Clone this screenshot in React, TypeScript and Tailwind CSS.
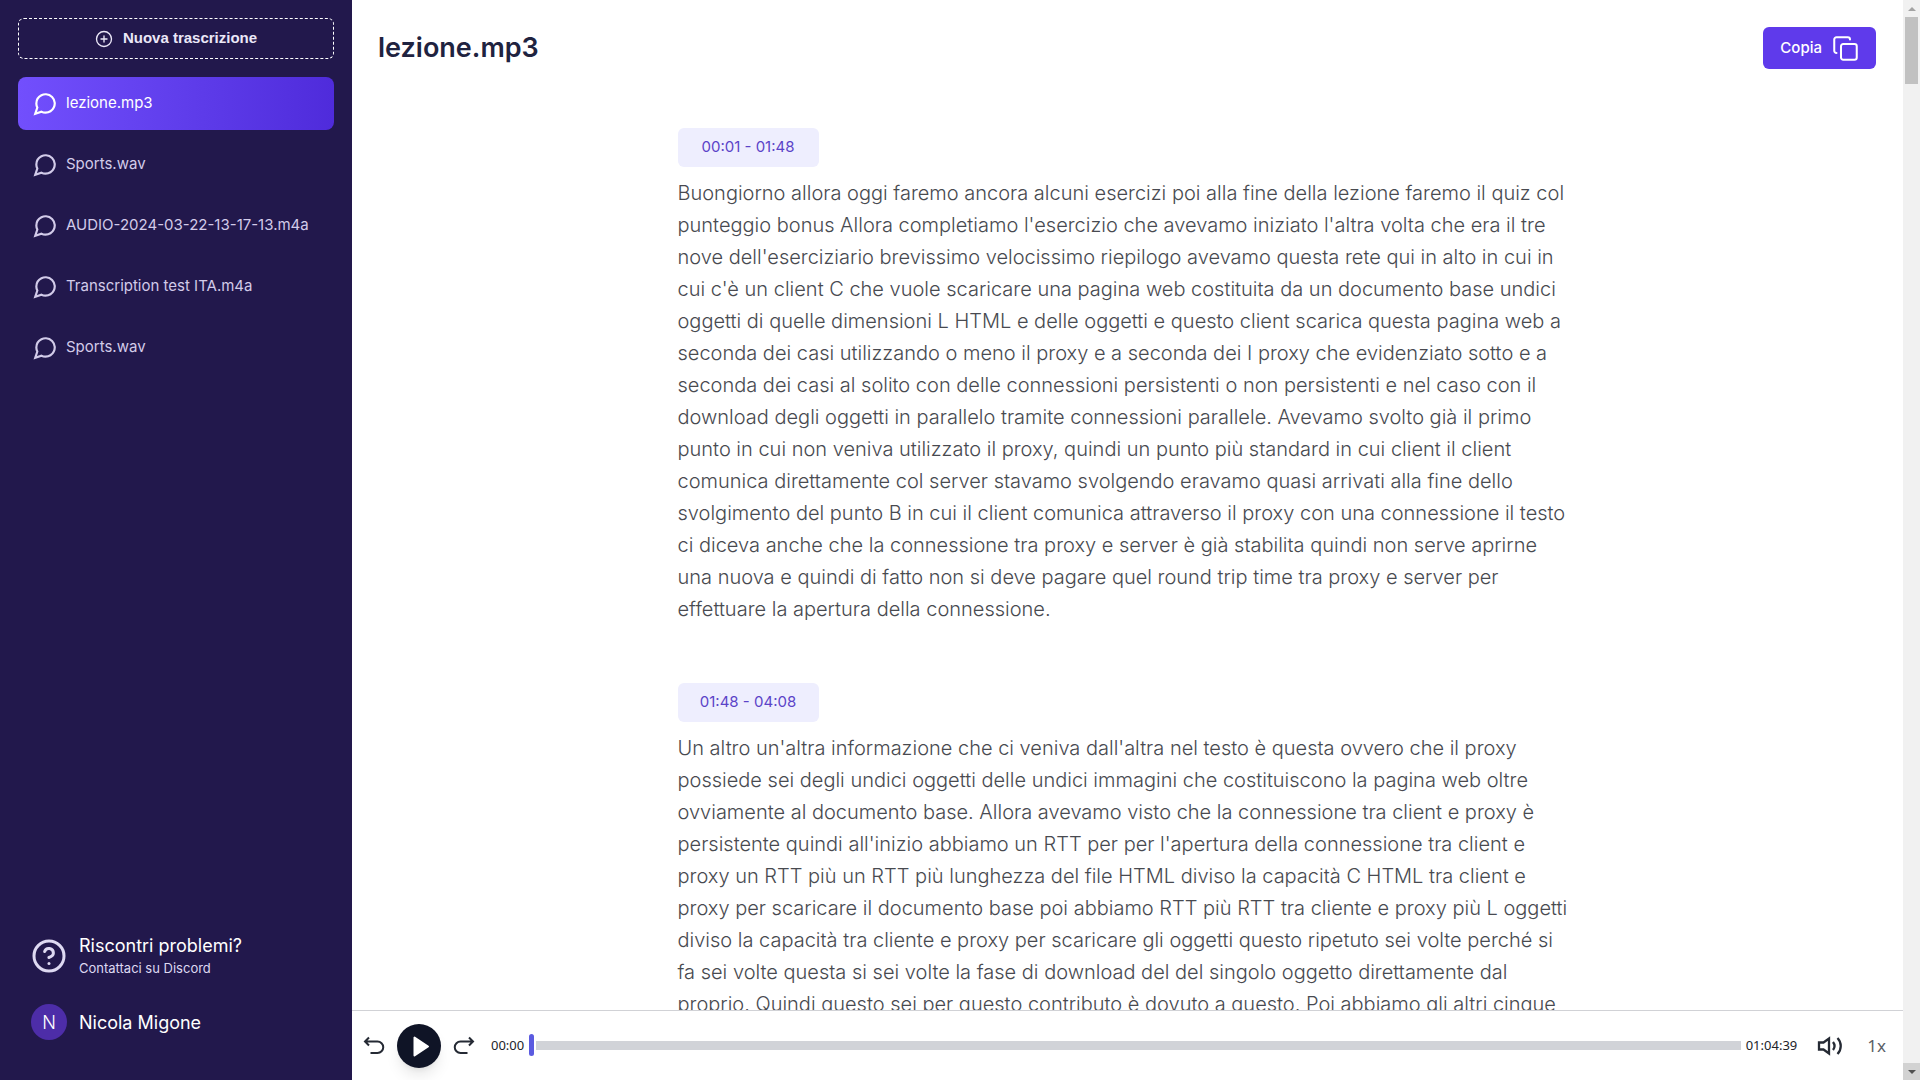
import React from "react";
import { CirclePlus, Copy, CircleHelp } from "lucide-react";

const files = [
  "lezione.mp3",
  "Sports.wav",
  "AUDIO-2024-03-22-13-17-13.m4a",
  "Transcription test ITA.m4a",
  "Sports.wav",
];

const segments = [
  {
    range: "00:01 - 01:48",
    text: "Buongiorno allora oggi faremo ancora alcuni esercizi poi alla fine della lezione faremo il quiz col punteggio bonus Allora completiamo l'esercizio che avevamo iniziato l'altra volta che era il tre nove dell'eserciziario brevissimo velocissimo riepilogo avevamo questa rete qui in alto in cui in cui c'è un client C che vuole scaricare una pagina web costituita da un documento base undici oggetti di quelle dimensioni L HTML e delle oggetti e questo client scarica questa pagina web a seconda dei casi utilizzando o meno il proxy e a seconda dei I proxy che evidenziato sotto e a seconda dei casi al solito con delle connessioni persistenti o non persistenti e nel caso con il download degli oggetti in parallelo tramite connessioni parallele. Avevamo svolto già il primo punto in cui non veniva utilizzato il proxy, quindi un punto più standard in cui client il client comunica direttamente col server stavamo svolgendo eravamo quasi arrivati alla fine dello svolgimento del punto B in cui il client comunica attraverso il proxy con una connessione il testo ci diceva anche che la connessione tra proxy e server è già stabilita quindi non serve aprirne una nuova e quindi di fatto non si deve pagare quel round trip time tra proxy e server per effettuare la apertura della connessione.",
  },
  {
    range: "01:48 - 04:08",
    text: "Un altro un'altra informazione che ci veniva dall'altra nel testo è questa ovvero che il proxy possiede sei degli undici oggetti delle undici immagini che costituiscono la pagina web oltre ovviamente al documento base. Allora avevamo visto che la connessione tra client e proxy è persistente quindi all'inizio abbiamo un RTT per per l'apertura della connessione tra client e proxy un RTT più un RTT più lunghezza del file HTML diviso la capacità C HTML tra client e proxy per scaricare il documento base poi abbiamo RTT più RTT tra cliente e proxy più L oggetti diviso la capacità tra cliente e proxy per scaricare gli oggetti questo ripetuto sei volte perché si fa sei volte questa si sei volte la fase di download del del singolo oggetto direttamente dal proprio. Quindi questo sei per questo contributo è dovuto a questo. Poi abbiamo gli altri cinque",
  },
];

function ChatIcon() {
  return (
    <svg viewBox="0 0 24 24" fill="none" stroke="currentColor" strokeWidth="2" className="size-[26px] shrink-0" aria-hidden="true">
      <path d="M21 11.5a8.38 8.38 0 0 1-.9 3.8 8.5 8.5 0 0 1-7.6 4.7 8.38 8.38 0 0 1-3.8-.9L3 21l1.9-5.7a8.38 8.38 0 0 1-.9-3.8 8.5 8.5 0 0 1 4.7-7.6 8.38 8.38 0 0 1 3.8-.9h.5a8.48 8.48 0 0 1 8 8v.5z" />
    </svg>
  );
}

function UndoIcon({ className = "" }: { className?: string }) {
  return (
    <svg viewBox="0 0 22 20" fill="none" stroke="currentColor" strokeWidth="2" className={`h-5 w-[22px] ${className}`} aria-hidden="true">
      <path d="M6 1.5 2 5.5l4 4M2 5.5h12.5a5.7 5.7 0 0 1 0 11.5H7.5" />
    </svg>
  );
}

function VolumeIcon() {
  return (
    <svg viewBox="0 0 26 20" fill="none" stroke="currentColor" strokeWidth="2.3" className="h-5 w-[26px]" aria-hidden="true">
      <path d="M2 6.5h4.5L12 2.5v15l-5.5-4H2z" />
      <path d="M16 6a6.5 6.5 0 0 1 0 8M20.5 2a11.5 11.5 0 0 1 0 16" />
    </svg>
  );
}

function Sidebar() {
  return (
    <aside className="flex w-[352px] shrink-0 flex-col bg-[#22184c] px-[18px] pt-[18px] pb-10 text-[#ded9f2]">
      <button type="button" className="flex h-[41px] shrink-0 items-center justify-center gap-2.5 rounded-md border border-dashed border-white font-['Liberation_Sans',sans-serif] text-[15px] font-bold text-[#ebe7f8]">
        <CirclePlus size={18} strokeWidth={1.8} />
        Nuova trascrizione
      </button>
      <nav className="mt-[18px] flex flex-col gap-2">
        {files.map((name, i) => (
          <a
            key={i}
            href="#"
            className={
              i === 0
                ? "flex h-[53px] items-center gap-2 rounded-lg bg-linear-to-r from-[#724ffd] to-[#4f2bdb] px-[14px] text-[15px] whitespace-nowrap text-white"
                : "flex h-[53px] items-center gap-2 rounded-lg px-[14px] text-[15px] whitespace-nowrap text-[#d2cbe9]"
            }
          >
            <ChatIcon />
            {name}
          </a>
        ))}
      </nav>
      <div className="mt-auto flex flex-col gap-[26px] px-[13px]">
        <a href="#" className="flex items-center gap-3">
          <CircleHelp size={36} strokeWidth={2} />
          <span className="flex flex-col">
            <span className="text-[18px] leading-6 text-white">Riscontri problemi?</span>
            <span className="text-[13px] leading-5">Contattaci su Discord</span>
          </span>
        </a>
        <a href="#" className="flex items-center gap-3 text-[18px] text-white">
          <span className="flex size-9 items-center justify-center rounded-full bg-[#4d2da8]">
            <span className="font-light">N</span>
          </span>
          Nicola Migone
        </a>
      </div>
    </aside>
  );
}

function Player() {
  return (
    <footer className="flex h-[70px] shrink-0 items-center border-t border-[#d1d2d6] pr-[17px] pl-[11px] text-[#252a34]">
      <button type="button" aria-label="Indietro"><UndoIcon /></button>
      <button type="button" aria-label="Riproduci" className="mx-3 flex size-11 items-center justify-center rounded-full bg-[#0f1426] text-white shadow-lg">
        <svg viewBox="0 0 44 44" fill="currentColor" stroke="currentColor" strokeLinejoin="round" strokeWidth="2" className="size-11" aria-hidden="true">
          <path d="M17.5 13.5v18L31 22.5z" />
        </svg>
      </button>
      <button type="button" aria-label="Avanti"><UndoIcon className="-scale-x-100" /></button>
      <span className="ml-4 font-['Noto_Sans',sans-serif] text-[13px] text-[#22242a]">00:00</span>
      <input
        type="range"
        aria-label="Posizione"
        min={0}
        max={3879}
        defaultValue={0}
        className="mx-[5px] h-[22px] min-w-0 flex-1 appearance-none bg-transparent [&::-webkit-slider-runnable-track]:h-[9px] [&::-webkit-slider-runnable-track]:bg-[#d1d3d8] [&::-webkit-slider-thumb]:-mt-[7px] [&::-webkit-slider-thumb]:h-[22px] [&::-webkit-slider-thumb]:w-[5px] [&::-webkit-slider-thumb]:appearance-none [&::-webkit-slider-thumb]:rounded-full [&::-webkit-slider-thumb]:bg-[#5b5be0] [&::-webkit-slider-thumb]:shadow-[2px_0_0_white]"
      />
      <span className="font-['Noto_Sans',sans-serif] text-[13px] text-[#22242a]">01:04:39</span>
      <button type="button" aria-label="Volume" className="ml-5"><VolumeIcon /></button>
      <button type="button" className="ml-6 font-['Noto_Sans',sans-serif] text-[17px] text-[#5b5f68]">1x</button>
    </footer>
  );
}

function Scrollbar() {
  return (
    <div className="flex w-[17px] shrink-0 flex-col items-center bg-[#f1f1f1]" aria-hidden="true">
      <div className="flex h-[17px] items-center">
        <div className="border-x-4 border-b-4 border-x-transparent border-b-[#a3a3a3]" />
      </div>
      <div className="h-[67px] w-[13px] bg-[#c1c1c1]" />
      <div className="mt-auto flex h-[17px] w-full items-center justify-center bg-[#d2d2d2]">
        <div className="border-x-4 border-t-4 border-x-transparent border-t-[#505050]" />
      </div>
    </div>
  );
}

export default function App() {
  return (
    <div className="flex h-screen overflow-hidden bg-white font-['Inter',sans-serif]">
      <Sidebar />
      <div className="flex min-w-0 flex-1 flex-col">
        <header className="flex h-24 shrink-0 items-center justify-between pr-[27px] pl-[26px]">
          <h1 className="text-[27px] leading-10 font-semibold text-[#1f2340]">lezione.mp3</h1>
          <button type="button" className="flex h-[42px] items-center gap-2.5 rounded-md bg-[#5f3aeb] px-[17px] text-[15px] font-medium text-white">
            Copia
            <Copy size={27} strokeWidth={1.8} />
          </button>
        </header>
        <main className="min-h-0 flex-1 overflow-hidden pt-8 pr-1">
          <div className="mx-auto flex max-w-4xl flex-col gap-[58px]">
            {segments.map((s) => (
              <section key={s.range}>
                <button type="button" className="flex h-[39px] w-[141px] items-center justify-center rounded-md bg-[#eeeefe] text-[15px] text-[#5b43c8]">
                  {s.range}
                </button>
                <p className="mt-2.5 text-xl leading-8 font-light text-[#484a50]">{s.text}</p>
              </section>
            ))}
          </div>
        </main>
        <Player />
      </div>
      <Scrollbar />
    </div>
  );
}
